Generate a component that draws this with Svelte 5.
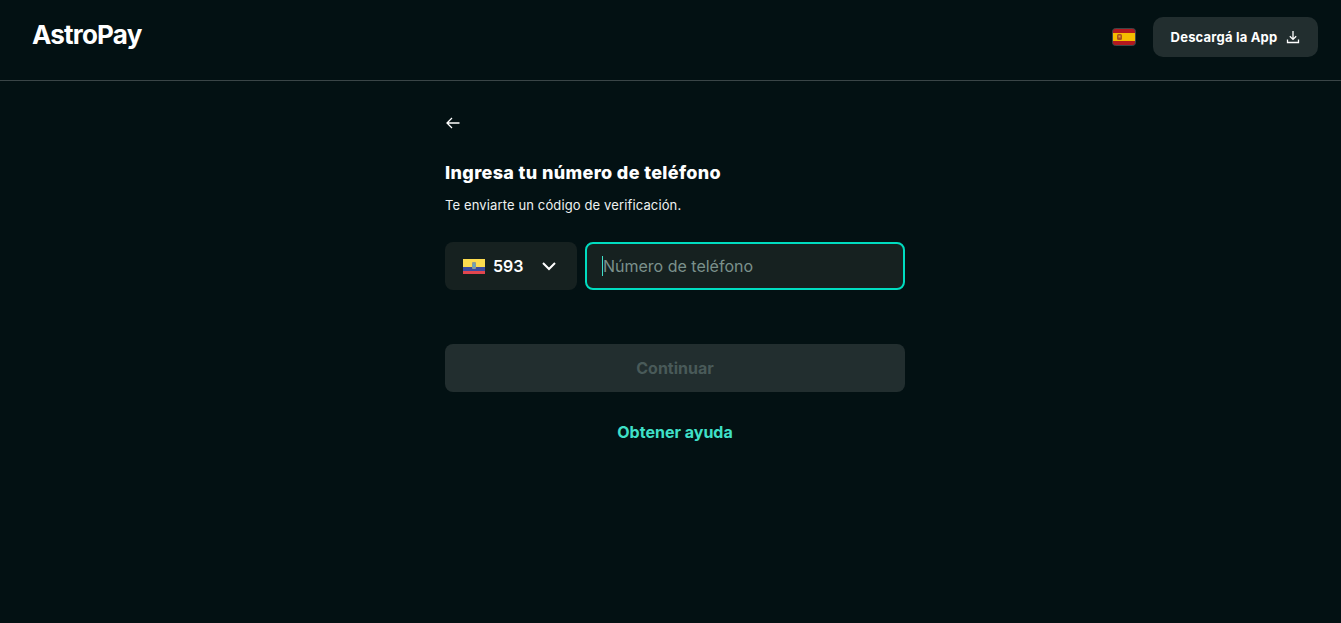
<script>
  let phone = $state('')
</script>

<div class="page">
  <header class="topbar">
    <span class="logo">AstroPay</span>
    <div class="actions">
      <svg class="flag-es" width="24" height="18" viewBox="0 0 24 18">
        <rect x="0.5" y="0.5" width="23" height="17" rx="3" fill="#b3191f" stroke="#3b4648" />
        <rect x="1" y="5" width="22" height="8" fill="#f5bd00" />
        <rect x="5" y="6" width="5" height="6" rx="1.5" fill="#a8501f" />
        <rect x="6.5" y="7.5" width="2" height="2" fill="#d9a23a" />
      </svg>
      <button class="download">
        Descargá la App
        <svg width="14" height="14" viewBox="0 0 14 14" fill="none" stroke="currentColor" stroke-width="1.3">
          <path d="M7 1v8M3.8 6.2 7 9.4l3.2-3.2" />
          <path d="M1.5 9.5v3h11v-3" />
        </svg>
      </button>
    </div>
  </header>

  <div class="content">
    <main class="form">
      <button class="back" aria-label="Volver">
        <svg width="16" height="14" viewBox="0 0 16 14" fill="none" stroke="currentColor" stroke-width="1.3">
          <path d="M14.5 7H2M7 2 2 7l5 5" />
        </svg>
      </button>

      <h1>Ingresa tu número de teléfono</h1>
      <p>Te enviarte un código de verificación.</p>

      <div class="phone-row">
        <button class="country">
          <svg width="22" height="15" viewBox="0 0 22 15">
            <rect width="22" height="8" fill="#fcdb4f" />
            <rect y="8" width="22" height="4" fill="#3a4a9f" />
            <rect y="12" width="22" height="3" fill="#e2464f" />
            <rect x="9" y="3" width="4" height="7" rx="1" fill="#8c9a94" />
            <rect x="10" y="5" width="2" height="3" fill="#5fa6c6" />
          </svg>
          <span class="code">593</span>
          <svg class="chev" width="16" height="10" viewBox="0 0 16 10" fill="none" stroke="currentColor" stroke-width="2">
            <path d="M2 2l6 6 6-6" />
          </svg>
        </button>
        <div class="phone-input">
          <span class="caret"></span>
          <input bind:value={phone} placeholder="Número de teléfono" />
        </div>
      </div>

      <button class="continue" disabled>Continuar</button>
      <a class="help" href="#ayuda">Obtener ayuda</a>
    </main>
  </div>
</div>

<style>
  :global(body) {
    background: #031113;
  }
  .page {
    height: 623px;
    background: #031113;
    color: #fff;
    font-family: Inter, "Liberation Sans", sans-serif;
    overflow: hidden;
  }
  button {
    font-family: inherit;
    border: none;
    cursor: pointer;
  }

  .topbar {
    height: 81px;
    box-sizing: border-box;
    border-bottom: 1px solid #3a4547;
    padding: 17px 23px 0 32px;
    display: flex;
    justify-content: space-between;
    align-items: flex-start;
  }
  .logo {
    font-size: 26px;
    font-weight: 700;
    line-height: 36px;
    letter-spacing: -0.8px;
  }
  .actions {
    display: flex;
    align-items: center;
    gap: 17px;
  }
  .flag-es {
    display: block;
  }
  .download {
    height: 40px;
    width: 165px;
    background: #222e2f;
    color: #fff;
    border-radius: 10px;
    font-size: 13px;
    font-weight: 700;
    letter-spacing: 0.2px;
    display: flex;
    align-items: center;
    justify-content: center;
    gap: 9px;
  }

  .content {
    padding-left: 9px;
  }
  .form {
    width: 460px;
    margin: 0 auto;
    padding-top: 32px;
    display: flex;
    flex-direction: column;
  }
  .back {
    align-self: flex-start;
    background: none;
    color: #fff;
    padding: 0;
    height: 20px;
    display: flex;
    align-items: center;
  }
  h1 {
    margin: 28px 0 0;
    font-size: 18px;
    line-height: 24px;
    font-weight: 800;
    letter-spacing: 0.35px;
  }
  p {
    margin: 11px 0 0;
    font-size: 13px;
    line-height: 18px;
    letter-spacing: 0.13px;
    color: #eef1f1;
  }

  .phone-row {
    display: flex;
    gap: 8px;
    margin-top: 28px;
  }
  .country {
    width: 132px;
    height: 48px;
    background: #162120;
    color: #fff;
    border-radius: 8px;
    padding: 0 20px 0 18px;
    display: flex;
    align-items: center;
  }
  .code {
    margin-left: 8px;
    font-size: 16px;
    font-weight: 600;
  }
  .chev {
    margin-left: auto;
  }
  .phone-input {
    position: relative;
    flex: 1;
    height: 48px;
    box-sizing: border-box;
    background: #162120;
    border: 2px solid #00dcc0;
    border-radius: 8px;
    padding: 0 16px;
    display: flex;
    align-items: center;
  }
  .caret {
    position: absolute;
    left: 15px;
    top: 12px;
    width: 1px;
    height: 20px;
    background: #3fe0c8;
  }
  input {
    width: 100%;
    background: none;
    border: none;
    outline: none;
    color: #fff;
    font-family: inherit;
    font-size: 16px;
    padding: 0;
  }
  input::placeholder {
    color: #7b918c;
    opacity: 1;
  }

  .continue {
    margin-top: 54px;
    height: 48px;
    background: #222e2f;
    color: #495a59;
    border-radius: 8px;
    font-size: 16px;
    font-weight: 700;
    cursor: default;
  }
  .help {
    margin-top: 30px;
    text-align: center;
    font-size: 16px;
    line-height: 20px;
    font-weight: 700;
    color: #3fe0c8;
    text-decoration: none;
  }
</style>
